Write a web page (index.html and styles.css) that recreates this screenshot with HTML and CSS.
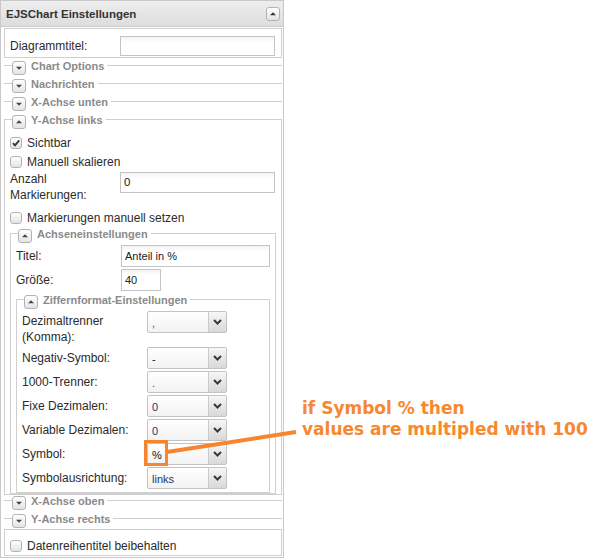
FILE: index.html
```html
<!DOCTYPE html>
<html lang="de">
<head>
<meta charset="utf-8">
<title>EJSChart Einstellungen</title>
<link rel="stylesheet" href="styles.css">
</head>
<body>
<div class="panel">
  <div class="panel-head">
    <span class="panel-title">EJSChart Einstellungen</span>
    <span class="btn"><svg viewBox="0 0 14 14" width="12" height="12"><path d="M3.5 8.5 L7 5 L10.5 8.5 Z" fill="#333"/></svg></span>
  </div>
  <div class="panel-body">
    <div class="box diag">
      <span class="lbl w110">Diagrammtitel:</span>
      <span class="input w155"></span>
    </div>

    <div class="sec first">
      <div class="head"><span class="l"></span><span class="btn"><svg viewBox="0 0 14 14" width="12" height="12"><path d="M3.5 5.5 L7 9 L10.5 5.5 Z" fill="#444"/></svg></span><span class="title">Chart Options</span><span class="r"></span></div>
    </div>
    <div class="sec">
      <div class="head"><span class="l"></span><span class="btn"><svg viewBox="0 0 14 14" width="12" height="12"><path d="M3.5 5.5 L7 9 L10.5 5.5 Z" fill="#444"/></svg></span><span class="title">Nachrichten</span><span class="r"></span></div>
    </div>
    <div class="sec">
      <div class="head"><span class="l"></span><span class="btn"><svg viewBox="0 0 14 14" width="12" height="12"><path d="M3.5 5.5 L7 9 L10.5 5.5 Z" fill="#444"/></svg></span><span class="title">X-Achse unten</span><span class="r"></span></div>
    </div>

    <div class="sec open yl">
      <div class="head"><span class="l"></span><span class="btn"><svg viewBox="0 0 14 14" width="12" height="12"><path d="M3.5 8.5 L7 5 L10.5 8.5 Z" fill="#444"/></svg></span><span class="title">Y-Achse links</span><span class="r"></span></div>
      <div class="sec-body yl-body">
        <div class="cb-row"><span class="cb"><svg viewBox="0 0 12 12" width="12" height="12"><path d="M3 6.2 L5 8.4 L9.2 3.4" fill="none" stroke="#333" stroke-width="1.8"/></svg></span><span>Sichtbar</span></div>
        <div class="cb-row"><span class="cb"></span><span>Manuell skalieren</span></div>
        <div class="field-row two">
          <span class="lbl w110 ml">Anzahl<br>Markierungen:</span>
          <span class="input w155 h21 top1">0</span>
        </div>
        <div class="cb-row mt5"><span class="cb"></span><span>Markierungen manuell setzen</span></div>

        <div class="sec open ach">
          <div class="head"><span class="l"></span><span class="btn"><svg viewBox="0 0 14 14" width="12" height="12"><path d="M3.5 8.5 L7 5 L10.5 8.5 Z" fill="#444"/></svg></span><span class="title">Achseneinstellungen</span><span class="r"></span></div>
          <div class="sec-body ach-body">
            <div class="field-row">
              <span class="lbl w105">Titel:</span>
              <span class="input w149 h22 small">Anteil in %</span>
            </div>
            <div class="field-row mt2">
              <span class="lbl w105">Größe:</span>
              <span class="input w40 h22 small">40</span>
            </div>

            <div class="sec open zf">
              <div class="head"><span class="l"></span><span class="btn"><svg viewBox="0 0 14 14" width="12" height="12"><path d="M3.5 8.5 L7 5 L10.5 8.5 Z" fill="#444"/></svg></span><span class="title">Ziffernformat-Einstellungen</span><span class="r"></span></div>
              <div class="sec-body zf-body">
                <div class="field-row two">
                  <span class="lbl w125 ml pt2">Dezimaltrenner<br>(Komma):</span>
                  <span class="select"><span class="val v-pink">,</span><span class="arrow"><svg viewBox="0 0 9 6" width="9" height="6"><path d="M1 1 L4.5 4.5 L8 1" fill="none" stroke="#3a3a3a" stroke-width="2"/></svg></span></span>
                </div>
                <div class="field-row mt2">
                  <span class="lbl w125">Negativ-Symbol:</span>
                  <span class="select"><span class="val v-dark">-</span><span class="arrow"><svg viewBox="0 0 9 6" width="9" height="6"><path d="M1 1 L4.5 4.5 L8 1" fill="none" stroke="#3a3a3a" stroke-width="2"/></svg></span></span>
                </div>
                <div class="field-row mt2">
                  <span class="lbl w125">1000-Trenner:</span>
                  <span class="select"><span class="val v-pink">.</span><span class="arrow"><svg viewBox="0 0 9 6" width="9" height="6"><path d="M1 1 L4.5 4.5 L8 1" fill="none" stroke="#3a3a3a" stroke-width="2"/></svg></span></span>
                </div>
                <div class="field-row mt2">
                  <span class="lbl w125">Fixe Dezimalen:</span>
                  <span class="select"><span class="val">0</span><span class="arrow"><svg viewBox="0 0 9 6" width="9" height="6"><path d="M1 1 L4.5 4.5 L8 1" fill="none" stroke="#3a3a3a" stroke-width="2"/></svg></span></span>
                </div>
                <div class="field-row mt2">
                  <span class="lbl w125">Variable Dezimalen:</span>
                  <span class="select"><span class="val">0</span><span class="arrow"><svg viewBox="0 0 9 6" width="9" height="6"><path d="M1 1 L4.5 4.5 L8 1" fill="none" stroke="#3a3a3a" stroke-width="2"/></svg></span></span>
                </div>
                <div class="field-row mt2">
                  <span class="lbl w125">Symbol:</span>
                  <span class="select"><span class="val v-dark">%</span><span class="arrow"><svg viewBox="0 0 9 6" width="9" height="6"><path d="M1 1 L4.5 4.5 L8 1" fill="none" stroke="#3a3a3a" stroke-width="2"/></svg></span></span>
                </div>
                <div class="field-row mt2">
                  <span class="lbl w125">Symbolausrichtung:</span>
                  <span class="select"><span class="val">links</span><span class="arrow"><svg viewBox="0 0 9 6" width="9" height="6"><path d="M1 1 L4.5 4.5 L8 1" fill="none" stroke="#3a3a3a" stroke-width="2"/></svg></span></span>
                </div>
              </div>
            </div>
          </div>
        </div>
      </div>
    </div>

    <div class="sec xo">
      <div class="head"><span class="l"></span><span class="btn"><svg viewBox="0 0 14 14" width="12" height="12"><path d="M3.5 5.5 L7 9 L10.5 5.5 Z" fill="#444"/></svg></span><span class="title">X-Achse oben</span><span class="r"></span></div>
    </div>
    <div class="sec">
      <div class="head"><span class="l"></span><span class="btn"><svg viewBox="0 0 14 14" width="12" height="12"><path d="M3.5 5.5 L7 9 L10.5 5.5 Z" fill="#444"/></svg></span><span class="title">Y-Achse rechts</span><span class="r"></span></div>
    </div>

    <div class="box last">
      <div class="cb-row"><span class="cb"></span><span>Datenreihentitel beibehalten</span></div>
    </div>
  </div>
</div>

<svg class="callout" width="611" height="558" viewBox="0 0 611 558">
  <rect x="145.5" y="441.5" width="21" height="23" fill="none" stroke="#f7842f" stroke-width="3"/>
  <line x1="167" y1="452" x2="296" y2="432" stroke="#f7842f" stroke-width="4"/>
</svg>
<div class="note">if Symbol % then<br>values are multipled with 100</div>
</body>
</html>
```

FILE: styles.css
```css
* { box-sizing: border-box; }

body {
  margin: 0;
  background: #fff;
  font-family: "Liberation Sans", Arial, sans-serif;
  font-size: 12px;
  color: #2b2b2b;
  position: relative;
}

.panel {
  width: 284px;
  height: 558px;
  border: 1px solid #c9c9c9;
  display: flex;
  flex-direction: column;
}

.panel-head {
  height: 26px;
  flex: none;
  border-bottom: 1px solid #cbcbcb;
  background: linear-gradient(#eeeeee, #dddddd);
  display: flex;
  align-items: center;
  justify-content: space-between;
  padding: 0 3px 0 5px;
}

.panel-title {
  font-weight: bold;
  font-size: 11.5px;
  color: #333;
}

.panel-body {
  padding: 1px 1px 0 3px;
}

.btn {
  width: 14px;
  height: 14px;
  flex: none;
  border: 1px solid #b3b3b3;
  border-radius: 3px;
  background: linear-gradient(#ffffff, #e4e4e4);
  display: flex;
  align-items: center;
  justify-content: center;
}

.box {
  border: 1px solid #d0d0d0;
}

.diag {
  display: flex;
  align-items: center;
  padding: 7px 6px 1px 5px;
}

.lbl { flex: none; }
.w105 { width: 105px; }
.w110 { width: 110px; }
.w125 { width: 125px; }
.ml { line-height: 16px; }
.pt2 { padding-top: 2px; }

.input {
  display: block;
  flex: none;
  height: 20px;
  border: 1px solid #c4c4c4;
  background: linear-gradient(#f3f3f3, #ffffff 5px);
  padding-left: 3px;
  line-height: 19px;
  color: #222;
  font-size: 11.5px;
}
.input.small { font-size: 11px; }
.w155 { width: 155px; }
.w149 { width: 149px; }
.w40 { width: 40px; }
.h21 { height: 21px; }
.h22 { height: 22px; line-height: 20px; }
.top1 { margin-top: 1px; }

/* sections (fieldset-like) */
.sec { margin-top: 4px; }
.sec.first { margin-top: 3px; }
.sec.xo { margin-top: 1px; }

.head {
  display: flex;
  height: 14px;
}
.head .l {
  width: 8px;
  flex: none;
  margin-top: 4px;
  border-top: 1px solid #cfcfcf;
}
.head .r {
  flex: 1;
  margin-top: 4px;
  border-top: 1px solid #cfcfcf;
}
.head .title {
  padding: 0 3px 0 5px;
  line-height: 11px;
  font-weight: bold;
  font-size: 11px;
  color: #8a8a8a;
  white-space: nowrap;
}
.sec.open > .head .l { border-left: 1px solid #cfcfcf; }
.sec.open > .head .r { border-right: 1px solid #cfcfcf; }

.sec-body {
  border: 1px solid #cfcfcf;
  border-top: 0;
}

.yl-body { padding: 4px 5px 0 5px; }
.ach { margin-top: 2px; }
.ach-body { padding: 2px 5px 0 5px; }
.zf { margin-top: 4px; }
.zf-body { padding: 2px 5px 3px 5px; }

.cb-row {
  height: 19px;
  display: flex;
  align-items: center;
  gap: 5px;
}
.mt5 { margin-top: 5px; }
.mt2 { margin-top: 2px; }

.cb {
  width: 12px;
  height: 12px;
  flex: none;
  border: 1px solid #b4b4b4;
  border-radius: 3px;
  background: linear-gradient(#ffffff, #e2e2e2);
  display: flex;
  align-items: center;
  justify-content: center;
}
.cb svg { display: block; margin: -1px; }

.field-row {
  display: flex;
  align-items: center;
}
.field-row.two { align-items: flex-start; }

.select {
  width: 80px;
  height: 22px;
  flex: none;
  display: flex;
  border: 1px solid #c2c2c2;
  border-radius: 2px;
  background: linear-gradient(#ffffff, #f2f2f2);
}
.select .val {
  flex: 1;
  padding-left: 4px;
  line-height: 22px;
  font-size: 11px;
  color: #1e3466;
}
.select .val.v-pink { color: #7a2a5a; }
.select .val.v-dark { color: #111; }
.select .arrow {
  width: 18px;
  flex: none;
  border-left: 1px solid #cbcbcb;
  background: linear-gradient(#f6f6f6, #d9d9d9);
  display: flex;
  align-items: center;
  justify-content: center;
}

.last {
  margin-top: 1px;
  padding: 6px 5px 0 5px;
}

/* annotation callout */
.callout {
  position: absolute;
  left: 0;
  top: 0;
  pointer-events: none;
}
.note {
  position: absolute;
  left: 302px;
  top: 398px;
  font-family: "DejaVu Sans", Verdana, sans-serif;
  font-weight: bold;
  font-size: 17px;
  line-height: 21px;
  color: #f7882f;
  white-space: nowrap;
}
```
